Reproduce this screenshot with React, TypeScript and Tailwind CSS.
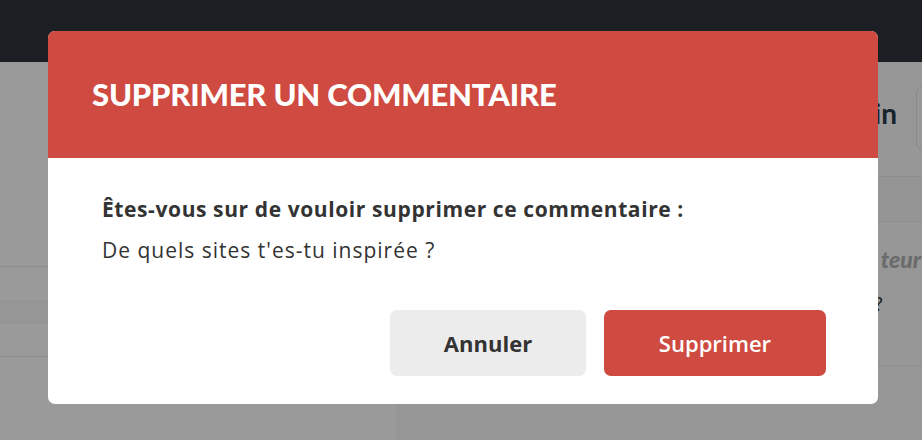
export default function App() {
  const lato = { fontFamily: '"Lato", "Open Sans", sans-serif' };
  const body = { fontFamily: '"Open Sans", "Lato", sans-serif' };

  return (
    <div className="relative h-[440px] w-[922px] overflow-hidden bg-[#9a9a9a]" style={lato}>
      <div className="h-[62px] bg-[#1b1f23]" />

      <div className="flex h-[378px]">
        {/* dimmed page behind the dialog */}
        <div className="flex w-[397px] flex-col bg-[#9a9a9a]">
          <div className="h-[204px]" />
          <div className="h-[1px] bg-[#8e8e8e]" />
          <div className="h-[33px]" />
          <div className="h-[24px] bg-[#969696]" />
          <div className="h-[32px]" />
          <div className="h-[1px] bg-[#8e8e8e]" />
        </div>
        <div className="flex flex-1 flex-col border-l border-[#949494] bg-[#979797]">
          <div className="flex h-[114px] items-start justify-end pt-[23px]">
            <span className="mr-[19px] mt-[14px] text-[28px] font-bold leading-none text-[#17222c]">in</span>
            <div className="mr-[-20px] h-[66px] w-[26px] rounded-l-[8px] border border-[#8a8a8a]" />
          </div>
          <div className="h-[1px] bg-[#8e8e8e]" />
          <div className="h-[44px] bg-[#959595]" />
          <div className="h-[1px] bg-[#8e8e8e]" />
          <div className="flex h-[143px] flex-col items-end">
            <span className="mr-[1px] mt-[26px] text-[23px] font-black italic leading-none text-[#6b6b6b]">teur</span>
            <span className="mr-[39px] mt-[22px] text-[20px] leading-none text-[#222]">?</span>
          </div>
          <div className="h-[1px] bg-[#8e8e8e]" />
        </div>
      </div>

      {/* dialog */}
      <div className="absolute left-[48px] top-[31px] w-[830px] overflow-hidden rounded-[7px] bg-white">
        <div className="flex h-[127px] items-center bg-[#cf4a40] px-[44px]">
          <h2 className="text-[31px] font-black uppercase leading-none tracking-[-0.2px] text-white">
            Supprimer un commentaire
          </h2>
        </div>
        <div className="pb-[28px] pl-[54px] pr-[52px] pt-[36px]" style={body}>
          <p className="text-[21px] font-bold leading-[30px] tracking-[0.6px] text-[#333333]">
            Êtes-vous sur de vouloir supprimer ce commentaire :
          </p>
          <p className="mt-[11px] text-[21px] leading-[30px] tracking-[1px] text-[#333333]">
            De quels sites t'es-tu inspirée ?
          </p>
          <div className="mt-[45px] flex justify-end gap-[18px]">
            <button className="h-[66px] w-[196px] rounded-[7px] bg-[#ececec] text-[22px] font-bold text-[#333333]">
              Annuler
            </button>
            <button className="h-[66px] w-[222px] rounded-[7px] bg-[#cf4a40] text-[22px] font-semibold text-white">
              Supprimer
            </button>
          </div>
        </div>
      </div>
    </div>
  );
}
